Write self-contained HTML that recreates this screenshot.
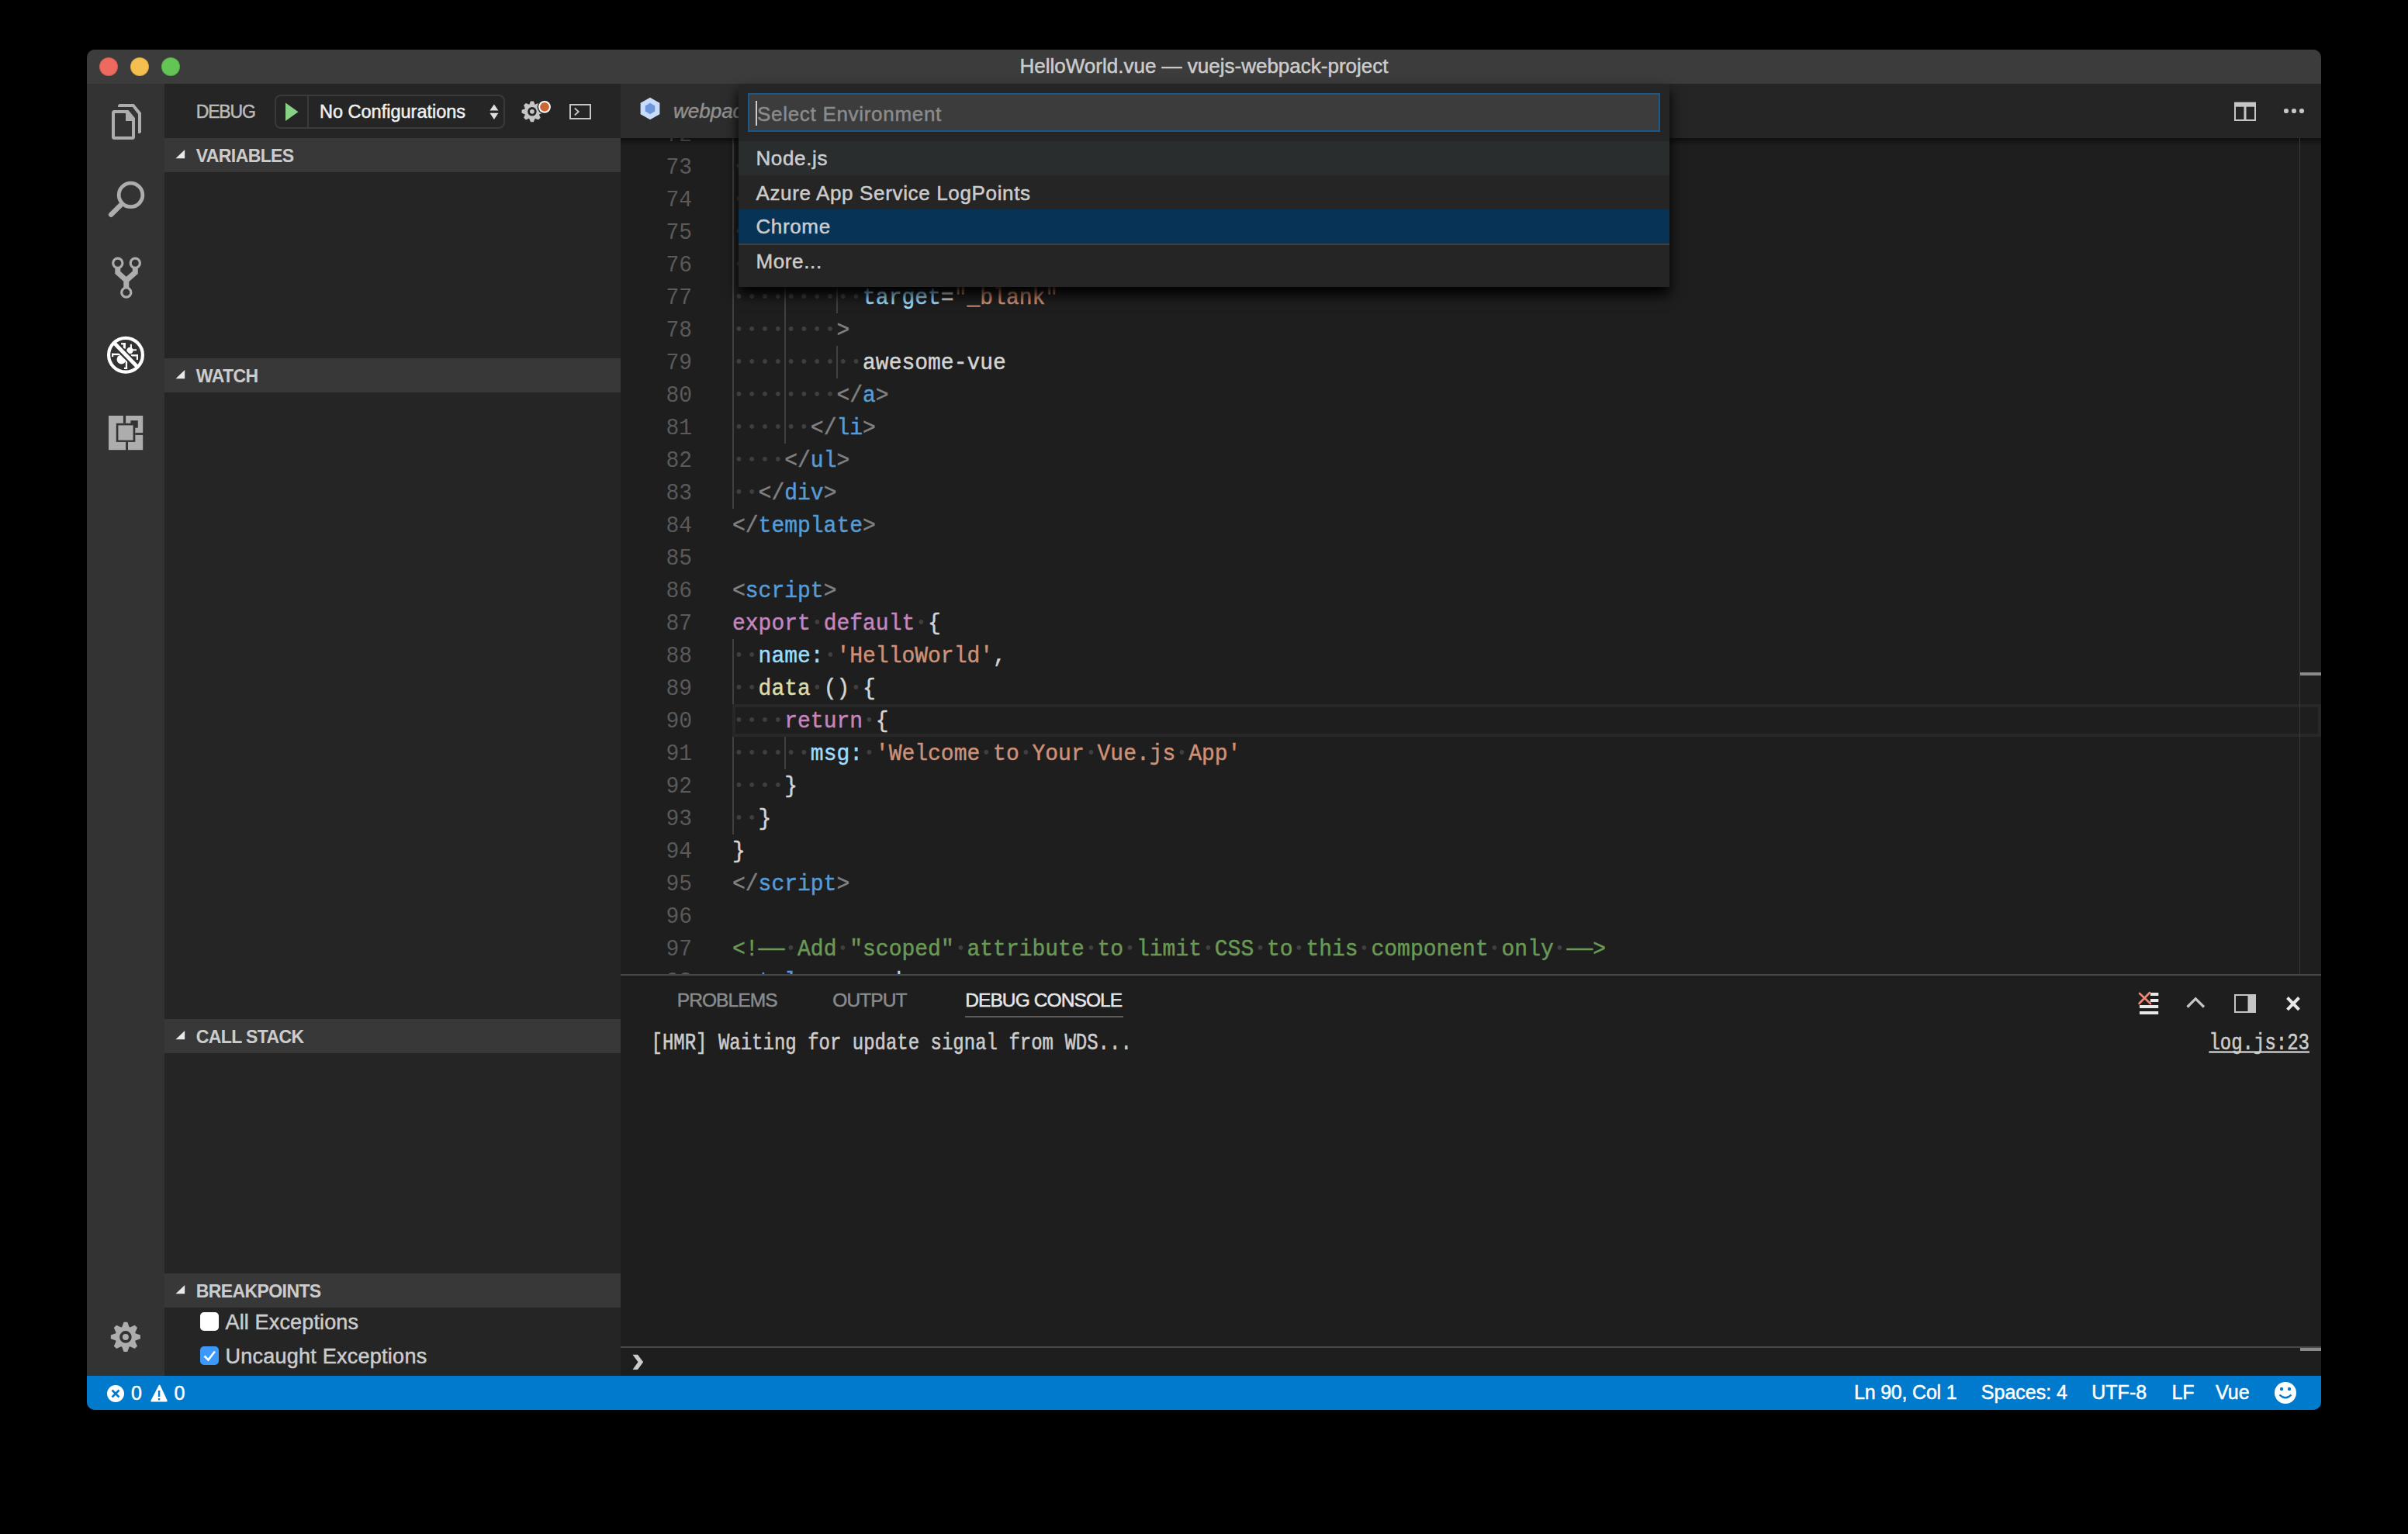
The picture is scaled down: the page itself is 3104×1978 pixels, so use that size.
<!DOCTYPE html>
<html><head><meta charset="utf-8">
<style>
*{margin:0;padding:0;box-sizing:border-box}
html,body{width:3104px;height:1978px;background:#000;overflow:hidden;font-family:"Liberation Sans",sans-serif;position:relative}
</style></head><body>
<div style="position:absolute;left:112px;top:64px;width:2880px;height:1754px;border-radius:10px;overflow:hidden;background:#1e1e1e">
</div>
<div style="position:absolute;left:112.00px;top:64.00px;width:2880.00px;height:44.00px;background:#3c3c3c;border-radius:10px 10px 0 0;"></div>
<div style="position:absolute;left:128px;top:74px;width:24px;height:24px;border-radius:50%;background:#ed6a5e;box-shadow:inset 0 0 0 1px rgba(0,0,0,0.12)"></div>
<div style="position:absolute;left:168px;top:74px;width:24px;height:24px;border-radius:50%;background:#f5bf4f;box-shadow:inset 0 0 0 1px rgba(0,0,0,0.12)"></div>
<div style="position:absolute;left:208px;top:74px;width:24px;height:24px;border-radius:50%;background:#62c554;box-shadow:inset 0 0 0 1px rgba(0,0,0,0.12)"></div>
<div style="position:absolute;top:71.79px;font-size:26.00px;line-height:26.00px;color:#cccccc;font-family:'Liberation Sans',sans-serif;white-space:pre;left:852.00px;width:1400.00px;text-align:center;-webkit-text-stroke:0.50px #cccccc;">HelloWorld.vue — vuejs-webpack-project</div>
<div style="position:absolute;left:112.00px;top:108.00px;width:100.00px;height:1666.00px;background:#333333;"></div>
<div style="position:absolute;left:212.00px;top:108.00px;width:588.00px;height:1666.00px;background:#252526;"></div>
<div style="position:absolute;top:133.03px;font-size:23.00px;line-height:23.00px;color:#bbbbbb;font-family:'Liberation Sans',sans-serif;white-space:pre;left:252.80px;-webkit-text-stroke:0.50px #bbbbbb;letter-spacing:-1.20px;">DEBUG</div>
<div style="position:absolute;left:354px;top:122px;width:297px;height:44px;border:2px solid #3a3a3a;border-radius:8px"></div>
<div style="position:absolute;left:396.00px;top:124.00px;width:2.00px;height:40.00px;background:#3a3a3a;"></div>
<div style="position:absolute;top:133.10px;font-size:23.50px;line-height:23.50px;color:#f0f0f0;font-family:'Liberation Sans',sans-serif;white-space:pre;left:412.00px;-webkit-text-stroke:0.50px #f0f0f0;">No Configurations</div>
<div style="position:absolute;left:212.00px;top:178.00px;width:588.00px;height:44.00px;background:#383838;"></div>
<div style="position:absolute;top:189.53px;font-size:23.00px;line-height:23.00px;color:#cccccc;font-family:'Liberation Sans',sans-serif;white-space:pre;left:252.80px;font-weight:bold;-webkit-text-stroke:0.10px #cccccc;letter-spacing:-0.60px;">VARIABLES</div>
<div style="position:absolute;left:212.00px;top:462.00px;width:588.00px;height:44.00px;background:#383838;"></div>
<div style="position:absolute;top:473.53px;font-size:23.00px;line-height:23.00px;color:#cccccc;font-family:'Liberation Sans',sans-serif;white-space:pre;left:252.80px;font-weight:bold;-webkit-text-stroke:0.10px #cccccc;letter-spacing:-0.60px;">WATCH</div>
<div style="position:absolute;left:212.00px;top:1314.00px;width:588.00px;height:44.00px;background:#383838;"></div>
<div style="position:absolute;top:1325.53px;font-size:23.00px;line-height:23.00px;color:#cccccc;font-family:'Liberation Sans',sans-serif;white-space:pre;left:252.80px;font-weight:bold;-webkit-text-stroke:0.10px #cccccc;letter-spacing:-0.60px;">CALL STACK</div>
<div style="position:absolute;left:212.00px;top:1642.00px;width:588.00px;height:44.00px;background:#383838;"></div>
<div style="position:absolute;top:1653.53px;font-size:23.00px;line-height:23.00px;color:#cccccc;font-family:'Liberation Sans',sans-serif;white-space:pre;left:252.80px;font-weight:bold;-webkit-text-stroke:0.10px #cccccc;letter-spacing:-0.60px;">BREAKPOINTS</div>
<div style="position:absolute;left:258px;top:1692px;width:24px;height:24px;border-radius:5px;background:#ffffff"></div>
<div style="position:absolute;left:258px;top:1736px;width:24px;height:24px;border-radius:5px;background:#3b99fc"></div>
<div style="position:absolute;top:1692.14px;font-size:27.00px;line-height:27.00px;color:#cccccc;font-family:'Liberation Sans',sans-serif;white-space:pre;left:290.50px;-webkit-text-stroke:0.50px #cccccc;letter-spacing:0.15px;">All Exceptions</div>
<div style="position:absolute;top:1736.14px;font-size:27.00px;line-height:27.00px;color:#cccccc;font-family:'Liberation Sans',sans-serif;white-space:pre;left:290.50px;-webkit-text-stroke:0.50px #cccccc;letter-spacing:0.25px;">Uncaught Exceptions</div>
<div style="position:absolute;left:800.00px;top:108.00px;width:2192.00px;height:70.00px;background:#252526;"></div>
<div style="position:absolute;left:800.00px;top:108.00px;width:530.00px;height:70.00px;background:#2d2d2d;"></div>
<div style="position:absolute;top:129.89px;font-size:26.00px;line-height:26.00px;color:#8f8f8f;font-family:'Liberation Sans',sans-serif;white-space:pre;left:868.00px;-webkit-text-stroke:0.50px #8f8f8f;font-style:italic;">webpack.config.js</div>
<div style="position:absolute;left:800.00px;top:178.00px;width:2192.00px;height:1078.00px;background:#1e1e1e;"></div>
<div style="position:absolute;left:800.00px;top:1256.00px;width:2192.00px;height:518.00px;background:#1e1e1e;"></div>
<div style="position:absolute;left:800.00px;top:1256.00px;width:2192.00px;height:2.00px;background:#474747;"></div>
<div style="position:absolute;top:1277.76px;font-size:24.50px;line-height:24.50px;color:#8b8b8b;font-family:'Liberation Sans',sans-serif;white-space:pre;left:872.70px;-webkit-text-stroke:0.50px #8b8b8b;letter-spacing:-0.90px;">PROBLEMS</div>
<div style="position:absolute;top:1277.76px;font-size:24.50px;line-height:24.50px;color:#8b8b8b;font-family:'Liberation Sans',sans-serif;white-space:pre;left:1073.30px;-webkit-text-stroke:0.50px #8b8b8b;letter-spacing:-0.90px;">OUTPUT</div>
<div style="position:absolute;top:1277.76px;font-size:24.50px;line-height:24.50px;color:#e7e7e7;font-family:'Liberation Sans',sans-serif;white-space:pre;left:1244.20px;-webkit-text-stroke:0.50px #e7e7e7;letter-spacing:-0.90px;">DEBUG CONSOLE</div>
<div style="position:absolute;left:1244.00px;top:1310.00px;width:204.00px;height:2.00px;background:#5a5a5a;"></div>
<div style="position:absolute;top:1334.61px;font-size:24.00px;line-height:24.00px;color:#cccccc;font-family:'Liberation Mono',monospace;white-space:pre;left:839.50px;transform:scaleY(1.2);transform-origin:0 18.4px;-webkit-text-stroke:0.5px #cccccc;">[HMR] Waiting for update signal from WDS...</div>
<div style="position:absolute;top:1334.61px;font-size:24.00px;line-height:24.00px;color:#cccccc;font-family:'Liberation Mono',monospace;white-space:pre;right:127.00px;text-decoration:underline;text-decoration-skip-ink:none;transform:scaleY(1.2);transform-origin:0 18.4px;-webkit-text-stroke:0.5px #cccccc;">log.js:23</div>
<div style="position:absolute;left:800.00px;top:1736.00px;width:2192.00px;height:2.00px;background:#474747;"></div>
<div style="position:absolute;left:112.00px;top:1774.00px;width:2880.00px;height:44.00px;background:#007acc;border-radius:0 0 10px 10px;"></div>
<div style="position:absolute;top:1783.53px;font-size:25.00px;line-height:25.00px;color:#ffffff;font-family:'Liberation Sans',sans-serif;white-space:pre;left:169.00px;-webkit-text-stroke:0.50px #ffffff;">0</div>
<div style="position:absolute;top:1783.53px;font-size:25.00px;line-height:25.00px;color:#ffffff;font-family:'Liberation Sans',sans-serif;white-space:pre;left:224.50px;-webkit-text-stroke:0.50px #ffffff;">0</div>
<div style="position:absolute;top:1782.53px;font-size:25.00px;line-height:25.00px;color:#ffffff;font-family:'Liberation Sans',sans-serif;white-space:pre;left:2390.00px;-webkit-text-stroke:0.50px #ffffff;letter-spacing:-0.20px;">Ln 90, Col 1</div>
<div style="position:absolute;top:1782.53px;font-size:25.00px;line-height:25.00px;color:#ffffff;font-family:'Liberation Sans',sans-serif;white-space:pre;left:2553.80px;-webkit-text-stroke:0.50px #ffffff;">Spaces: 4</div>
<div style="position:absolute;top:1782.53px;font-size:25.00px;line-height:25.00px;color:#ffffff;font-family:'Liberation Sans',sans-serif;white-space:pre;left:2696.30px;-webkit-text-stroke:0.50px #ffffff;">UTF-8</div>
<div style="position:absolute;top:1782.53px;font-size:25.00px;line-height:25.00px;color:#ffffff;font-family:'Liberation Sans',sans-serif;white-space:pre;left:2799.40px;-webkit-text-stroke:0.50px #ffffff;">LF</div>
<div style="position:absolute;top:1782.53px;font-size:25.00px;line-height:25.00px;color:#ffffff;font-family:'Liberation Sans',sans-serif;white-space:pre;left:2856.00px;-webkit-text-stroke:0.50px #ffffff;">Vue</div>
<div style="position:absolute;left:944px;top:908px;width:2048px;height:42px;border:4px solid #282828"></div>
<div style="position:absolute;left:800px;top:178px;width:2164px;height:1078px;overflow:hidden">
<div style="position:absolute;left:144.0px;top:-26.0px;width:2px;height:504.0px;background:#404040"></div>
<div style="position:absolute;left:211.2px;top:-26.0px;width:2px;height:420.0px;background:#404040"></div>
<div style="position:absolute;left:278.4px;top:-26.0px;width:2px;height:42.0px;background:#404040"></div>
<div style="position:absolute;left:278.4px;top:16.0px;width:2px;height:84.0px;background:#404040"></div>
<div style="position:absolute;left:278.4px;top:142.0px;width:2px;height:84.0px;background:#404040"></div>
<div style="position:absolute;left:278.4px;top:268.0px;width:2px;height:42.0px;background:#404040"></div>
<div style="position:absolute;left:144.0px;top:646.0px;width:2px;height:84.0px;background:#404040"></div>
<div style="position:absolute;left:144.0px;top:772.0px;width:2px;height:126.0px;background:#404040"></div>
<div style="position:absolute;left:211.2px;top:772.0px;width:2px;height:42.0px;background:#404040"></div>
<div style="position:absolute;left:0;top:-24.5px;width:92px;height:42px;line-height:42px;text-align:right;font-family:'Liberation Mono',monospace;font-size:28px;color:#5a5a5a;transform:scaleY(1.08);transform-origin:0 28.4px">72</div>
<div style="position:absolute;left:144.0px;top:-26.0px;width:134.4px;height:42px;background:radial-gradient(circle at 8.4px 19.9px,#3f3f3f 2.5px,rgba(63,63,63,0) 3.3px) 0 0/16.8px 42px repeat-x"></div>
<div style="position:absolute;left:144.0px;top:-24.5px;height:42px;line-height:42px;white-space:pre;font-family:'Liberation Mono',monospace;font-size:28px;transform:scaleY(1.08);transform-origin:0 28.4px;-webkit-text-stroke:0.45px currentColor">        <span style="color:#808080">&lt;</span><span style="color:#569cd6">a</span></div>
<div style="position:absolute;left:0;top:17.5px;width:92px;height:42px;line-height:42px;text-align:right;font-family:'Liberation Mono',monospace;font-size:28px;color:#5a5a5a;transform:scaleY(1.08);transform-origin:0 28.4px">73</div>
<div style="position:absolute;left:144.0px;top:16.0px;width:168.0px;height:42px;background:radial-gradient(circle at 8.4px 19.9px,#3f3f3f 2.5px,rgba(63,63,63,0) 3.3px) 0 0/16.8px 42px repeat-x"></div>
<div style="position:absolute;left:144.0px;top:17.5px;height:42px;line-height:42px;white-space:pre;font-family:'Liberation Mono',monospace;font-size:28px;transform:scaleY(1.08);transform-origin:0 28.4px;-webkit-text-stroke:0.45px currentColor">          <span style="color:#9cdcfe">href</span><span style="color:#d4d4d4">=</span><span style="color:#ce9178">"github.com/vuejs/awesome-vue"</span></div>
<div style="position:absolute;left:0;top:59.5px;width:92px;height:42px;line-height:42px;text-align:right;font-family:'Liberation Mono',monospace;font-size:28px;color:#5a5a5a;transform:scaleY(1.08);transform-origin:0 28.4px">74</div>
<div style="position:absolute;left:144.0px;top:58.0px;width:168.0px;height:42px;background:radial-gradient(circle at 8.4px 19.9px,#3f3f3f 2.5px,rgba(63,63,63,0) 3.3px) 0 0/16.8px 42px repeat-x"></div>
<div style="position:absolute;left:144.0px;top:59.5px;height:42px;line-height:42px;white-space:pre;font-family:'Liberation Mono',monospace;font-size:28px;transform:scaleY(1.08);transform-origin:0 28.4px;-webkit-text-stroke:0.45px currentColor">          <span style="color:#9cdcfe">target</span><span style="color:#d4d4d4">=</span><span style="color:#ce9178">"_blank"</span></div>
<div style="position:absolute;left:0;top:101.5px;width:92px;height:42px;line-height:42px;text-align:right;font-family:'Liberation Mono',monospace;font-size:28px;color:#5a5a5a;transform:scaleY(1.08);transform-origin:0 28.4px">75</div>
<div style="position:absolute;left:144.0px;top:100.0px;width:134.4px;height:42px;background:radial-gradient(circle at 8.4px 19.9px,#3f3f3f 2.5px,rgba(63,63,63,0) 3.3px) 0 0/16.8px 42px repeat-x"></div>
<div style="position:absolute;left:144.0px;top:101.5px;height:42px;line-height:42px;white-space:pre;font-family:'Liberation Mono',monospace;font-size:28px;transform:scaleY(1.08);transform-origin:0 28.4px;-webkit-text-stroke:0.45px currentColor">        <span style="color:#808080">&gt;</span></div>
<div style="position:absolute;left:0;top:143.5px;width:92px;height:42px;line-height:42px;text-align:right;font-family:'Liberation Mono',monospace;font-size:28px;color:#5a5a5a;transform:scaleY(1.08);transform-origin:0 28.4px">76</div>
<div style="position:absolute;left:144.0px;top:142.0px;width:168.0px;height:42px;background:radial-gradient(circle at 8.4px 19.9px,#3f3f3f 2.5px,rgba(63,63,63,0) 3.3px) 0 0/16.8px 42px repeat-x"></div>
<div style="position:absolute;left:144.0px;top:143.5px;height:42px;line-height:42px;white-space:pre;font-family:'Liberation Mono',monospace;font-size:28px;transform:scaleY(1.08);transform-origin:0 28.4px;-webkit-text-stroke:0.45px currentColor">          <span style="color:#9cdcfe">href</span><span style="color:#d4d4d4">=</span><span style="color:#ce9178">"github.com/vuejs/awesome-vue"</span></div>
<div style="position:absolute;left:0;top:185.5px;width:92px;height:42px;line-height:42px;text-align:right;font-family:'Liberation Mono',monospace;font-size:28px;color:#5a5a5a;transform:scaleY(1.08);transform-origin:0 28.4px">77</div>
<div style="position:absolute;left:144.0px;top:184.0px;width:168.0px;height:42px;background:radial-gradient(circle at 8.4px 19.9px,#3f3f3f 2.5px,rgba(63,63,63,0) 3.3px) 0 0/16.8px 42px repeat-x"></div>
<div style="position:absolute;left:144.0px;top:185.5px;height:42px;line-height:42px;white-space:pre;font-family:'Liberation Mono',monospace;font-size:28px;transform:scaleY(1.08);transform-origin:0 28.4px;-webkit-text-stroke:0.45px currentColor">          <span style="color:#9cdcfe">target</span><span style="color:#d4d4d4">=</span><span style="color:#ce9178">"_blank"</span></div>
<div style="position:absolute;left:0;top:227.5px;width:92px;height:42px;line-height:42px;text-align:right;font-family:'Liberation Mono',monospace;font-size:28px;color:#5a5a5a;transform:scaleY(1.08);transform-origin:0 28.4px">78</div>
<div style="position:absolute;left:144.0px;top:226.0px;width:134.4px;height:42px;background:radial-gradient(circle at 8.4px 19.9px,#3f3f3f 2.5px,rgba(63,63,63,0) 3.3px) 0 0/16.8px 42px repeat-x"></div>
<div style="position:absolute;left:144.0px;top:227.5px;height:42px;line-height:42px;white-space:pre;font-family:'Liberation Mono',monospace;font-size:28px;transform:scaleY(1.08);transform-origin:0 28.4px;-webkit-text-stroke:0.45px currentColor">        <span style="color:#808080">&gt;</span></div>
<div style="position:absolute;left:0;top:269.5px;width:92px;height:42px;line-height:42px;text-align:right;font-family:'Liberation Mono',monospace;font-size:28px;color:#5a5a5a;transform:scaleY(1.08);transform-origin:0 28.4px">79</div>
<div style="position:absolute;left:144.0px;top:268.0px;width:168.0px;height:42px;background:radial-gradient(circle at 8.4px 19.9px,#3f3f3f 2.5px,rgba(63,63,63,0) 3.3px) 0 0/16.8px 42px repeat-x"></div>
<div style="position:absolute;left:144.0px;top:269.5px;height:42px;line-height:42px;white-space:pre;font-family:'Liberation Mono',monospace;font-size:28px;transform:scaleY(1.08);transform-origin:0 28.4px;-webkit-text-stroke:0.45px currentColor">          <span style="color:#d4d4d4">awesome-vue</span></div>
<div style="position:absolute;left:0;top:311.5px;width:92px;height:42px;line-height:42px;text-align:right;font-family:'Liberation Mono',monospace;font-size:28px;color:#5a5a5a;transform:scaleY(1.08);transform-origin:0 28.4px">80</div>
<div style="position:absolute;left:144.0px;top:310.0px;width:134.4px;height:42px;background:radial-gradient(circle at 8.4px 19.9px,#3f3f3f 2.5px,rgba(63,63,63,0) 3.3px) 0 0/16.8px 42px repeat-x"></div>
<div style="position:absolute;left:144.0px;top:311.5px;height:42px;line-height:42px;white-space:pre;font-family:'Liberation Mono',monospace;font-size:28px;transform:scaleY(1.08);transform-origin:0 28.4px;-webkit-text-stroke:0.45px currentColor">        <span style="color:#808080">&lt;/</span><span style="color:#569cd6">a</span><span style="color:#808080">&gt;</span></div>
<div style="position:absolute;left:0;top:353.5px;width:92px;height:42px;line-height:42px;text-align:right;font-family:'Liberation Mono',monospace;font-size:28px;color:#5a5a5a;transform:scaleY(1.08);transform-origin:0 28.4px">81</div>
<div style="position:absolute;left:144.0px;top:352.0px;width:100.8px;height:42px;background:radial-gradient(circle at 8.4px 19.9px,#3f3f3f 2.5px,rgba(63,63,63,0) 3.3px) 0 0/16.8px 42px repeat-x"></div>
<div style="position:absolute;left:144.0px;top:353.5px;height:42px;line-height:42px;white-space:pre;font-family:'Liberation Mono',monospace;font-size:28px;transform:scaleY(1.08);transform-origin:0 28.4px;-webkit-text-stroke:0.45px currentColor">      <span style="color:#808080">&lt;/</span><span style="color:#569cd6">li</span><span style="color:#808080">&gt;</span></div>
<div style="position:absolute;left:0;top:395.5px;width:92px;height:42px;line-height:42px;text-align:right;font-family:'Liberation Mono',monospace;font-size:28px;color:#5a5a5a;transform:scaleY(1.08);transform-origin:0 28.4px">82</div>
<div style="position:absolute;left:144.0px;top:394.0px;width:67.2px;height:42px;background:radial-gradient(circle at 8.4px 19.9px,#3f3f3f 2.5px,rgba(63,63,63,0) 3.3px) 0 0/16.8px 42px repeat-x"></div>
<div style="position:absolute;left:144.0px;top:395.5px;height:42px;line-height:42px;white-space:pre;font-family:'Liberation Mono',monospace;font-size:28px;transform:scaleY(1.08);transform-origin:0 28.4px;-webkit-text-stroke:0.45px currentColor">    <span style="color:#808080">&lt;/</span><span style="color:#569cd6">ul</span><span style="color:#808080">&gt;</span></div>
<div style="position:absolute;left:0;top:437.5px;width:92px;height:42px;line-height:42px;text-align:right;font-family:'Liberation Mono',monospace;font-size:28px;color:#5a5a5a;transform:scaleY(1.08);transform-origin:0 28.4px">83</div>
<div style="position:absolute;left:144.0px;top:436.0px;width:33.6px;height:42px;background:radial-gradient(circle at 8.4px 19.9px,#3f3f3f 2.5px,rgba(63,63,63,0) 3.3px) 0 0/16.8px 42px repeat-x"></div>
<div style="position:absolute;left:144.0px;top:437.5px;height:42px;line-height:42px;white-space:pre;font-family:'Liberation Mono',monospace;font-size:28px;transform:scaleY(1.08);transform-origin:0 28.4px;-webkit-text-stroke:0.45px currentColor">  <span style="color:#808080">&lt;/</span><span style="color:#569cd6">div</span><span style="color:#808080">&gt;</span></div>
<div style="position:absolute;left:0;top:479.5px;width:92px;height:42px;line-height:42px;text-align:right;font-family:'Liberation Mono',monospace;font-size:28px;color:#5a5a5a;transform:scaleY(1.08);transform-origin:0 28.4px">84</div>
<div style="position:absolute;left:144.0px;top:479.5px;height:42px;line-height:42px;white-space:pre;font-family:'Liberation Mono',monospace;font-size:28px;transform:scaleY(1.08);transform-origin:0 28.4px;-webkit-text-stroke:0.45px currentColor"><span style="color:#808080">&lt;/</span><span style="color:#569cd6">template</span><span style="color:#808080">&gt;</span></div>
<div style="position:absolute;left:0;top:521.5px;width:92px;height:42px;line-height:42px;text-align:right;font-family:'Liberation Mono',monospace;font-size:28px;color:#5a5a5a;transform:scaleY(1.08);transform-origin:0 28.4px">85</div>
<div style="position:absolute;left:144.0px;top:521.5px;height:42px;line-height:42px;white-space:pre;font-family:'Liberation Mono',monospace;font-size:28px;transform:scaleY(1.08);transform-origin:0 28.4px;-webkit-text-stroke:0.45px currentColor"></div>
<div style="position:absolute;left:0;top:563.5px;width:92px;height:42px;line-height:42px;text-align:right;font-family:'Liberation Mono',monospace;font-size:28px;color:#5a5a5a;transform:scaleY(1.08);transform-origin:0 28.4px">86</div>
<div style="position:absolute;left:144.0px;top:563.5px;height:42px;line-height:42px;white-space:pre;font-family:'Liberation Mono',monospace;font-size:28px;transform:scaleY(1.08);transform-origin:0 28.4px;-webkit-text-stroke:0.45px currentColor"><span style="color:#808080">&lt;</span><span style="color:#569cd6">script</span><span style="color:#808080">&gt;</span></div>
<div style="position:absolute;left:0;top:605.5px;width:92px;height:42px;line-height:42px;text-align:right;font-family:'Liberation Mono',monospace;font-size:28px;color:#5a5a5a;transform:scaleY(1.08);transform-origin:0 28.4px">87</div>
<div style="position:absolute;left:244.8px;top:604.0px;width:16.8px;height:42px;background:radial-gradient(circle at 8.4px 19.9px,#3f3f3f 2.5px,rgba(63,63,63,0) 3.3px) 0 0/16.8px 42px repeat-x"></div>
<div style="position:absolute;left:379.2px;top:604.0px;width:16.8px;height:42px;background:radial-gradient(circle at 8.4px 19.9px,#3f3f3f 2.5px,rgba(63,63,63,0) 3.3px) 0 0/16.8px 42px repeat-x"></div>
<div style="position:absolute;left:144.0px;top:605.5px;height:42px;line-height:42px;white-space:pre;font-family:'Liberation Mono',monospace;font-size:28px;transform:scaleY(1.08);transform-origin:0 28.4px;-webkit-text-stroke:0.45px currentColor"><span style="color:#c586c0">export</span> <span style="color:#c586c0">default</span> <span style="color:#d4d4d4">{</span></div>
<div style="position:absolute;left:0;top:647.5px;width:92px;height:42px;line-height:42px;text-align:right;font-family:'Liberation Mono',monospace;font-size:28px;color:#5a5a5a;transform:scaleY(1.08);transform-origin:0 28.4px">88</div>
<div style="position:absolute;left:144.0px;top:646.0px;width:33.6px;height:42px;background:radial-gradient(circle at 8.4px 19.9px,#3f3f3f 2.5px,rgba(63,63,63,0) 3.3px) 0 0/16.8px 42px repeat-x"></div>
<div style="position:absolute;left:261.6px;top:646.0px;width:16.8px;height:42px;background:radial-gradient(circle at 8.4px 19.9px,#3f3f3f 2.5px,rgba(63,63,63,0) 3.3px) 0 0/16.8px 42px repeat-x"></div>
<div style="position:absolute;left:144.0px;top:647.5px;height:42px;line-height:42px;white-space:pre;font-family:'Liberation Mono',monospace;font-size:28px;transform:scaleY(1.08);transform-origin:0 28.4px;-webkit-text-stroke:0.45px currentColor">  <span style="color:#9cdcfe">name:</span> <span style="color:#ce9178">'HelloWorld'</span><span style="color:#d4d4d4">,</span></div>
<div style="position:absolute;left:0;top:689.5px;width:92px;height:42px;line-height:42px;text-align:right;font-family:'Liberation Mono',monospace;font-size:28px;color:#5a5a5a;transform:scaleY(1.08);transform-origin:0 28.4px">89</div>
<div style="position:absolute;left:144.0px;top:688.0px;width:33.6px;height:42px;background:radial-gradient(circle at 8.4px 19.9px,#3f3f3f 2.5px,rgba(63,63,63,0) 3.3px) 0 0/16.8px 42px repeat-x"></div>
<div style="position:absolute;left:244.8px;top:688.0px;width:16.8px;height:42px;background:radial-gradient(circle at 8.4px 19.9px,#3f3f3f 2.5px,rgba(63,63,63,0) 3.3px) 0 0/16.8px 42px repeat-x"></div>
<div style="position:absolute;left:295.2px;top:688.0px;width:16.8px;height:42px;background:radial-gradient(circle at 8.4px 19.9px,#3f3f3f 2.5px,rgba(63,63,63,0) 3.3px) 0 0/16.8px 42px repeat-x"></div>
<div style="position:absolute;left:144.0px;top:689.5px;height:42px;line-height:42px;white-space:pre;font-family:'Liberation Mono',monospace;font-size:28px;transform:scaleY(1.08);transform-origin:0 28.4px;-webkit-text-stroke:0.45px currentColor">  <span style="color:#dcdcaa">data</span> <span style="color:#d4d4d4">()</span> <span style="color:#d4d4d4">{</span></div>
<div style="position:absolute;left:0;top:731.5px;width:92px;height:42px;line-height:42px;text-align:right;font-family:'Liberation Mono',monospace;font-size:28px;color:#5a5a5a;transform:scaleY(1.08);transform-origin:0 28.4px">90</div>
<div style="position:absolute;left:144.0px;top:730.0px;width:67.2px;height:42px;background:radial-gradient(circle at 8.4px 19.9px,#3f3f3f 2.5px,rgba(63,63,63,0) 3.3px) 0 0/16.8px 42px repeat-x"></div>
<div style="position:absolute;left:312.0px;top:730.0px;width:16.8px;height:42px;background:radial-gradient(circle at 8.4px 19.9px,#3f3f3f 2.5px,rgba(63,63,63,0) 3.3px) 0 0/16.8px 42px repeat-x"></div>
<div style="position:absolute;left:144.0px;top:731.5px;height:42px;line-height:42px;white-space:pre;font-family:'Liberation Mono',monospace;font-size:28px;transform:scaleY(1.08);transform-origin:0 28.4px;-webkit-text-stroke:0.45px currentColor">    <span style="color:#c586c0">return</span> <span style="color:#d4d4d4">{</span></div>
<div style="position:absolute;left:0;top:773.5px;width:92px;height:42px;line-height:42px;text-align:right;font-family:'Liberation Mono',monospace;font-size:28px;color:#5a5a5a;transform:scaleY(1.08);transform-origin:0 28.4px">91</div>
<div style="position:absolute;left:144.0px;top:772.0px;width:100.8px;height:42px;background:radial-gradient(circle at 8.4px 19.9px,#3f3f3f 2.5px,rgba(63,63,63,0) 3.3px) 0 0/16.8px 42px repeat-x"></div>
<div style="position:absolute;left:312.0px;top:772.0px;width:16.8px;height:42px;background:radial-gradient(circle at 8.4px 19.9px,#3f3f3f 2.5px,rgba(63,63,63,0) 3.3px) 0 0/16.8px 42px repeat-x"></div>
<div style="position:absolute;left:463.2px;top:772.0px;width:16.8px;height:42px;background:radial-gradient(circle at 8.4px 19.9px,#3f3f3f 2.5px,rgba(63,63,63,0) 3.3px) 0 0/16.8px 42px repeat-x"></div>
<div style="position:absolute;left:513.6px;top:772.0px;width:16.8px;height:42px;background:radial-gradient(circle at 8.4px 19.9px,#3f3f3f 2.5px,rgba(63,63,63,0) 3.3px) 0 0/16.8px 42px repeat-x"></div>
<div style="position:absolute;left:597.6px;top:772.0px;width:16.8px;height:42px;background:radial-gradient(circle at 8.4px 19.9px,#3f3f3f 2.5px,rgba(63,63,63,0) 3.3px) 0 0/16.8px 42px repeat-x"></div>
<div style="position:absolute;left:715.2px;top:772.0px;width:16.8px;height:42px;background:radial-gradient(circle at 8.4px 19.9px,#3f3f3f 2.5px,rgba(63,63,63,0) 3.3px) 0 0/16.8px 42px repeat-x"></div>
<div style="position:absolute;left:144.0px;top:773.5px;height:42px;line-height:42px;white-space:pre;font-family:'Liberation Mono',monospace;font-size:28px;transform:scaleY(1.08);transform-origin:0 28.4px;-webkit-text-stroke:0.45px currentColor">      <span style="color:#9cdcfe">msg:</span> <span style="color:#ce9178">'Welcome</span> <span style="color:#ce9178">to</span> <span style="color:#ce9178">Your</span> <span style="color:#ce9178">Vue.js</span> <span style="color:#ce9178">App'</span></div>
<div style="position:absolute;left:0;top:815.5px;width:92px;height:42px;line-height:42px;text-align:right;font-family:'Liberation Mono',monospace;font-size:28px;color:#5a5a5a;transform:scaleY(1.08);transform-origin:0 28.4px">92</div>
<div style="position:absolute;left:144.0px;top:814.0px;width:67.2px;height:42px;background:radial-gradient(circle at 8.4px 19.9px,#3f3f3f 2.5px,rgba(63,63,63,0) 3.3px) 0 0/16.8px 42px repeat-x"></div>
<div style="position:absolute;left:144.0px;top:815.5px;height:42px;line-height:42px;white-space:pre;font-family:'Liberation Mono',monospace;font-size:28px;transform:scaleY(1.08);transform-origin:0 28.4px;-webkit-text-stroke:0.45px currentColor">    <span style="color:#d4d4d4">}</span></div>
<div style="position:absolute;left:0;top:857.5px;width:92px;height:42px;line-height:42px;text-align:right;font-family:'Liberation Mono',monospace;font-size:28px;color:#5a5a5a;transform:scaleY(1.08);transform-origin:0 28.4px">93</div>
<div style="position:absolute;left:144.0px;top:856.0px;width:33.6px;height:42px;background:radial-gradient(circle at 8.4px 19.9px,#3f3f3f 2.5px,rgba(63,63,63,0) 3.3px) 0 0/16.8px 42px repeat-x"></div>
<div style="position:absolute;left:144.0px;top:857.5px;height:42px;line-height:42px;white-space:pre;font-family:'Liberation Mono',monospace;font-size:28px;transform:scaleY(1.08);transform-origin:0 28.4px;-webkit-text-stroke:0.45px currentColor">  <span style="color:#d4d4d4">}</span></div>
<div style="position:absolute;left:0;top:899.5px;width:92px;height:42px;line-height:42px;text-align:right;font-family:'Liberation Mono',monospace;font-size:28px;color:#5a5a5a;transform:scaleY(1.08);transform-origin:0 28.4px">94</div>
<div style="position:absolute;left:144.0px;top:899.5px;height:42px;line-height:42px;white-space:pre;font-family:'Liberation Mono',monospace;font-size:28px;transform:scaleY(1.08);transform-origin:0 28.4px;-webkit-text-stroke:0.45px currentColor"><span style="color:#d4d4d4">}</span></div>
<div style="position:absolute;left:0;top:941.5px;width:92px;height:42px;line-height:42px;text-align:right;font-family:'Liberation Mono',monospace;font-size:28px;color:#5a5a5a;transform:scaleY(1.08);transform-origin:0 28.4px">95</div>
<div style="position:absolute;left:144.0px;top:941.5px;height:42px;line-height:42px;white-space:pre;font-family:'Liberation Mono',monospace;font-size:28px;transform:scaleY(1.08);transform-origin:0 28.4px;-webkit-text-stroke:0.45px currentColor"><span style="color:#808080">&lt;/</span><span style="color:#569cd6">script</span><span style="color:#808080">&gt;</span></div>
<div style="position:absolute;left:0;top:983.5px;width:92px;height:42px;line-height:42px;text-align:right;font-family:'Liberation Mono',monospace;font-size:28px;color:#5a5a5a;transform:scaleY(1.08);transform-origin:0 28.4px">96</div>
<div style="position:absolute;left:144.0px;top:983.5px;height:42px;line-height:42px;white-space:pre;font-family:'Liberation Mono',monospace;font-size:28px;transform:scaleY(1.08);transform-origin:0 28.4px;-webkit-text-stroke:0.45px currentColor"></div>
<div style="position:absolute;left:0;top:1025.5px;width:92px;height:42px;line-height:42px;text-align:right;font-family:'Liberation Mono',monospace;font-size:28px;color:#5a5a5a;transform:scaleY(1.08);transform-origin:0 28.4px">97</div>
<div style="position:absolute;left:211.2px;top:1024.0px;width:16.8px;height:42px;background:radial-gradient(circle at 8.4px 19.9px,#3f3f3f 2.5px,rgba(63,63,63,0) 3.3px) 0 0/16.8px 42px repeat-x"></div>
<div style="position:absolute;left:278.4px;top:1024.0px;width:16.8px;height:42px;background:radial-gradient(circle at 8.4px 19.9px,#3f3f3f 2.5px,rgba(63,63,63,0) 3.3px) 0 0/16.8px 42px repeat-x"></div>
<div style="position:absolute;left:429.6px;top:1024.0px;width:16.8px;height:42px;background:radial-gradient(circle at 8.4px 19.9px,#3f3f3f 2.5px,rgba(63,63,63,0) 3.3px) 0 0/16.8px 42px repeat-x"></div>
<div style="position:absolute;left:597.6px;top:1024.0px;width:16.8px;height:42px;background:radial-gradient(circle at 8.4px 19.9px,#3f3f3f 2.5px,rgba(63,63,63,0) 3.3px) 0 0/16.8px 42px repeat-x"></div>
<div style="position:absolute;left:648.0px;top:1024.0px;width:16.8px;height:42px;background:radial-gradient(circle at 8.4px 19.9px,#3f3f3f 2.5px,rgba(63,63,63,0) 3.3px) 0 0/16.8px 42px repeat-x"></div>
<div style="position:absolute;left:748.8px;top:1024.0px;width:16.8px;height:42px;background:radial-gradient(circle at 8.4px 19.9px,#3f3f3f 2.5px,rgba(63,63,63,0) 3.3px) 0 0/16.8px 42px repeat-x"></div>
<div style="position:absolute;left:816.0px;top:1024.0px;width:16.8px;height:42px;background:radial-gradient(circle at 8.4px 19.9px,#3f3f3f 2.5px,rgba(63,63,63,0) 3.3px) 0 0/16.8px 42px repeat-x"></div>
<div style="position:absolute;left:866.4px;top:1024.0px;width:16.8px;height:42px;background:radial-gradient(circle at 8.4px 19.9px,#3f3f3f 2.5px,rgba(63,63,63,0) 3.3px) 0 0/16.8px 42px repeat-x"></div>
<div style="position:absolute;left:950.4px;top:1024.0px;width:16.8px;height:42px;background:radial-gradient(circle at 8.4px 19.9px,#3f3f3f 2.5px,rgba(63,63,63,0) 3.3px) 0 0/16.8px 42px repeat-x"></div>
<div style="position:absolute;left:1118.4px;top:1024.0px;width:16.8px;height:42px;background:radial-gradient(circle at 8.4px 19.9px,#3f3f3f 2.5px,rgba(63,63,63,0) 3.3px) 0 0/16.8px 42px repeat-x"></div>
<div style="position:absolute;left:1202.4px;top:1024.0px;width:16.8px;height:42px;background:radial-gradient(circle at 8.4px 19.9px,#3f3f3f 2.5px,rgba(63,63,63,0) 3.3px) 0 0/16.8px 42px repeat-x"></div>
<div style="position:absolute;left:144.0px;top:1025.5px;height:42px;line-height:42px;white-space:pre;font-family:'Liberation Mono',monospace;font-size:28px;transform:scaleY(1.08);transform-origin:0 28.4px;-webkit-text-stroke:0.45px currentColor"><span style="color:#6a9955">&lt;!——</span> <span style="color:#6a9955">Add</span> <span style="color:#6a9955">"scoped"</span> <span style="color:#6a9955">attribute</span> <span style="color:#6a9955">to</span> <span style="color:#6a9955">limit</span> <span style="color:#6a9955">CSS</span> <span style="color:#6a9955">to</span> <span style="color:#6a9955">this</span> <span style="color:#6a9955">component</span> <span style="color:#6a9955">only</span> <span style="color:#6a9955">——&gt;</span></div>
<div style="position:absolute;left:0;top:1067.5px;width:92px;height:42px;line-height:42px;text-align:right;font-family:'Liberation Mono',monospace;font-size:28px;color:#5a5a5a;transform:scaleY(1.08);transform-origin:0 28.4px">98</div>
<div style="position:absolute;left:244.8px;top:1066.0px;width:16.8px;height:42px;background:radial-gradient(circle at 8.4px 19.9px,#3f3f3f 2.5px,rgba(63,63,63,0) 3.3px) 0 0/16.8px 42px repeat-x"></div>
<div style="position:absolute;left:144.0px;top:1067.5px;height:42px;line-height:42px;white-space:pre;font-family:'Liberation Mono',monospace;font-size:28px;transform:scaleY(1.08);transform-origin:0 28.4px;-webkit-text-stroke:0.45px currentColor"><span style="color:#808080">&lt;</span><span style="color:#569cd6">style</span> <span style="color:#9cdcfe">scoped</span><span style="color:#808080">&gt;</span></div>
</div>
<div style="position:absolute;left:800px;top:178px;width:2192px;height:10px;background:linear-gradient(rgba(0,0,0,0.5),rgba(0,0,0,0))"></div>
<div style="position:absolute;left:2964.00px;top:178.00px;width:1.00px;height:1078.00px;background:#3a3a3a;"></div>
<div style="position:absolute;left:2965.00px;top:867.00px;width:27.00px;height:4.00px;background:#8a8a8a;"></div>
<div style="position:absolute;left:2965.00px;top:1738.00px;width:27.00px;height:4.00px;background:#8a8a8a;"></div>
<svg style="position:absolute;left:0;top:0" width="3104" height="1978" viewBox="0 0 3104 1978"><path fill="#adadad" fill-rule="evenodd" d="M144,145.5 Q144,142 147.5,142 H165.5 L174,152.3 V176.5 Q174,180 170.5,180 H147.5 Q144,180 144,176.5 Z M148,146 H162 V156 H170 V176 H148 Z"/><path fill="#adadad" d="M154.5,134 H172.6 L182,145.6 V169.5 Q182,172 179.5,172 H178 V147.2 L170.8,138 H152 Q152,134 154.5,134 Z"/><circle cx="168.5" cy="251.4" r="15.3" fill="none" stroke="#adadad" stroke-width="4.8"/><line x1="143.2" y1="276.8" x2="156" y2="264" stroke="#adadad" stroke-width="6.5" stroke-linecap="round"/><circle cx="151.8" cy="339.3" r="6.1" fill="none" stroke="#adadad" stroke-width="3.2"/><circle cx="174.3" cy="339.3" r="6.1" fill="none" stroke="#adadad" stroke-width="3.2"/><circle cx="162.8" cy="377.1" r="6.1" fill="none" stroke="#adadad" stroke-width="3.2"/><path d="M151.8,345.5 V351.5 L162.8,361.5 V371 M174.3,345.5 V351.5 L162.8,361.5" fill="none" stroke="#adadad" stroke-width="7"/><g fill="#ffffff"><circle cx="156.5" cy="463.5" r="5.9"/><rect x="144" y="455.7" width="11" height="2.4"/><rect x="144" y="455.7" width="2.2" height="4.4"/><rect x="161.8" y="464.5" width="2.3" height="11.5"/><rect x="160" y="473.7" width="4.1" height="2.3"/><circle cx="167.5" cy="452" r="4.2"/><rect x="156" y="442.2" width="5.9" height="2.2"/><rect x="158.8" y="442.2" width="3.1" height="7.4"/><rect x="167.9" y="443.9" width="2" height="7"/><rect x="167.9" y="450.3" width="8.1" height="1.9"/><rect x="168.5" y="457.1" width="9.5" height="2.4"/><rect x="175.8" y="457.1" width="2.2" height="6.8"/></g><line x1="147.6" y1="443.4" x2="176.4" y2="472.2" stroke="#333333" stroke-width="9"/><line x1="146" y1="441" x2="178" y2="474" stroke="#ffffff" stroke-width="4.7"/><circle cx="162" cy="457.8" r="21.9" fill="none" stroke="#ffffff" stroke-width="4.2"/><rect x="140" y="536" width="44.2" height="44.2" fill="#adadad"/><rect x="149.8" y="545.8" width="24.5" height="24.1" fill="#333333"/><rect x="158.9" y="535.0" width="3.2" height="10.8" fill="#333333"/><rect x="162.1" y="569.9" width="2.9" height="11.1" fill="#333333"/><rect x="174.3" y="558.1" width="10.7" height="2.8" fill="#333333"/><rect x="168.4" y="542.2" width="9.4" height="9.5" fill="#333333"/><rect x="152.4" y="548.4" width="19.2" height="19.2" fill="#adadad"/><path fill="#adadad" d="M157.25,1711.12 L159.56,1704.84 L164.24,1704.84 L166.55,1711.12 L167.65,1711.57 L173.72,1708.77 L177.03,1712.08 L174.23,1718.15 L174.68,1719.25 L180.96,1721.56 L180.96,1726.24 L174.68,1728.55 L174.23,1729.65 L177.03,1735.72 L173.72,1739.03 L167.65,1736.23 L166.55,1736.68 L164.24,1742.96 L159.56,1742.96 L157.25,1736.68 L156.15,1736.23 L150.08,1739.03 L146.77,1735.72 L149.57,1729.65 L149.12,1728.55 L142.84,1726.24 L142.84,1721.56 L149.12,1719.25 L149.57,1718.15 L146.77,1712.08 L150.08,1708.77 L156.15,1711.57 Z"/><circle cx="161.9" cy="1723.9" r="5.9" fill="none" stroke="#333333" stroke-width="3.8"/><path fill="#89d185" d="M368,132.4 L384.5,144.2 L368,156 Z"/><path fill="#e0e0e0" d="M631.4,142.4 L636.9,134.4 L642.4,142.4 Z M631.4,145.7 L642.4,145.7 L636.9,154 Z"/><path fill="#c5c5c5" d="M682.24,134.71 L683.96,130.44 L687.84,130.44 L689.56,134.71 L689.74,134.78 L693.97,132.98 L696.72,135.73 L694.92,139.96 L694.99,140.14 L699.26,141.86 L699.26,145.74 L694.99,147.46 L694.92,147.64 L696.72,151.87 L693.97,154.62 L689.74,152.82 L689.56,152.89 L687.84,157.16 L683.96,157.16 L682.24,152.89 L682.06,152.82 L677.83,154.62 L675.08,151.87 L676.88,147.64 L676.81,147.46 L672.54,145.74 L672.54,141.86 L676.81,140.14 L676.88,139.96 L675.08,135.73 L677.83,132.98 L682.06,134.78 Z"/><circle cx="685.9" cy="143.8" r="4.35" fill="none" stroke="#252526" stroke-width="2.9"/><circle cx="702" cy="137.8" r="9.4" fill="#252526"/><circle cx="702" cy="137.8" r="7.9" fill="#ffffff"/><circle cx="702" cy="137.8" r="5.9" fill="#cc6633"/><rect x="735" y="135" width="26" height="18" fill="none" stroke="#c5c5c5" stroke-width="2"/><path d="M740.8,139.5 L745.8,144 L740.8,148.5" fill="none" stroke="#c5c5c5" stroke-width="1.8"/><path fill="#e8e8e8" d="M226.5,204.3 L238.2,204.3 L238.2,193.0 Z"/><path fill="#e8e8e8" d="M226.5,488.3 L238.2,488.3 L238.2,477.0 Z"/><path fill="#e8e8e8" d="M226.5,1340.3 L238.2,1340.3 L238.2,1329.0 Z"/><path fill="#e8e8e8" d="M226.5,1668.3 L238.2,1668.3 L238.2,1657.0 Z"/><path d="M263.5,1748.5 L268.5,1753.5 L277,1742.5" fill="none" stroke="#ffffff" stroke-width="2.6"/><path fill="#c7dcfa" d="M838.00,154.30 L825.62,147.15 L825.62,132.85 L838.00,125.70 L850.38,132.85 L850.38,147.15 Z"/><path fill="#6f96dc" d="M838.00,147.20 L831.76,143.60 L831.76,136.40 L838.00,132.80 L844.24,136.40 L844.24,143.60 Z"/><rect x="2881" y="133" width="26" height="22" fill="none" stroke="#c5c5c5" stroke-width="2"/><rect x="2880" y="131.7" width="28" height="6" fill="#c5c5c5"/><rect x="2892.5" y="133" width="3" height="22" fill="#c5c5c5"/><circle cx="2947" cy="143" r="3.1" fill="#c5c5c5"/><circle cx="2957" cy="143" r="3.1" fill="#c5c5c5"/><circle cx="2967" cy="143" r="3.1" fill="#c5c5c5"/><rect x="2758" y="1280" width="24.2" height="4" fill="#e8e8e8"/><rect x="2758" y="1288" width="24.2" height="4" fill="#e8e8e8"/><rect x="2758" y="1296" width="24.2" height="4" fill="#e8e8e8"/><rect x="2758" y="1304" width="24.2" height="4" fill="#e8e8e8"/><rect x="2752" y="1276" width="20" height="20" fill="#1e1e1e"/><rect x="2772" y="1280" width="10.2" height="4" fill="#e8e8e8"/><rect x="2772" y="1288" width="10.2" height="4" fill="#e8e8e8"/><path d="M2757.5,1294 L2771,1280 M2758,1281 L2772,1294" stroke="#f48771" stroke-width="2.6" stroke-linecap="round"/><path d="M2819.5,1298.5 L2830.2,1287.8 L2841,1298.5" fill="none" stroke="#c5c5c5" stroke-width="3.2"/><rect x="2881" y="1283" width="26" height="22" fill="none" stroke="#c5c5c5" stroke-width="2"/><rect x="2897.5" y="1283" width="10.5" height="23" fill="#c5c5c5"/><path d="M2948.5,1286.5 L2963.5,1301.8 M2963.5,1286.5 L2948.5,1301.8" stroke="#e8e8e8" stroke-width="4"/><path fill="#cccccc" d="M815.5,1746.7 H822 L829.2,1756.3 L822,1766 H815.5 L822.5,1756.3 Z"/><circle cx="149" cy="1797" r="11" fill="#ffffff"/><path d="M144.5,1792.5 L153.5,1801.5 M153.5,1792.5 L144.5,1801.5" stroke="#007acc" stroke-width="2.6"/><path fill="#ffffff" d="M204.8,1786 Q205.6,1785 206.4,1786 L215.7,1806 Q216,1807.6 214.5,1807.6 H195.5 Q194,1807.6 194.4,1806 Z"/><rect x="203.9" y="1793" width="2.4" height="8" fill="#007acc"/><rect x="203.9" y="1803" width="2.4" height="2.4" fill="#007acc"/><circle cx="2946" cy="1796" r="14" fill="#ffffff"/><circle cx="2941" cy="1791" r="2.2" fill="#007acc"/><circle cx="2951" cy="1791" r="2.2" fill="#007acc"/><path d="M2938.5,1798.5 Q2946,1806 2953.5,1798.5" fill="none" stroke="#007acc" stroke-width="2.4"/></svg>
<div style="position:absolute;left:952px;top:108px;width:1200px;height:262px;background:#252526;box-shadow:0 10px 16px #000"></div>
<div style="position:absolute;left:964px;top:120px;width:1176px;height:50px;background:#3c3c3c;border:2px solid #1b5787"></div>
<div style="position:absolute;left:974.00px;top:130.00px;width:2.00px;height:32.00px;background:#cccccc;"></div>
<div style="position:absolute;top:133.69px;font-size:26.00px;line-height:26.00px;color:#8b8b8b;font-family:'Liberation Sans',sans-serif;white-space:pre;left:976.00px;-webkit-text-stroke:0.50px #8b8b8b;letter-spacing:0.70px;">Select Environment</div>
<div style="position:absolute;left:952.00px;top:182.00px;width:1200.00px;height:44.00px;background:#2a2d2e;"></div>
<div style="position:absolute;left:952.00px;top:270.00px;width:1200.00px;height:44.00px;background:#073456;"></div>
<div style="position:absolute;left:952.00px;top:314.00px;width:1200.00px;height:2.00px;background:#3f3f46;"></div>
<div style="position:absolute;top:191.49px;font-size:26.00px;line-height:26.00px;color:#cccccc;font-family:'Liberation Sans',sans-serif;white-space:pre;left:974.40px;-webkit-text-stroke:0.50px #cccccc;letter-spacing:0.65px;">Node.js</div>
<div style="position:absolute;top:235.69px;font-size:26.00px;line-height:26.00px;color:#cccccc;font-family:'Liberation Sans',sans-serif;white-space:pre;left:974.40px;-webkit-text-stroke:0.50px #cccccc;letter-spacing:0.65px;">Azure App Service LogPoints</div>
<div style="position:absolute;top:279.29px;font-size:26.00px;line-height:26.00px;color:#cccccc;font-family:'Liberation Sans',sans-serif;white-space:pre;left:974.40px;-webkit-text-stroke:0.50px #cccccc;letter-spacing:0.65px;">Chrome</div>
<div style="position:absolute;top:323.69px;font-size:26.00px;line-height:26.00px;color:#cccccc;font-family:'Liberation Sans',sans-serif;white-space:pre;left:974.40px;-webkit-text-stroke:0.50px #cccccc;letter-spacing:0.65px;">More...</div>
</body></html>
